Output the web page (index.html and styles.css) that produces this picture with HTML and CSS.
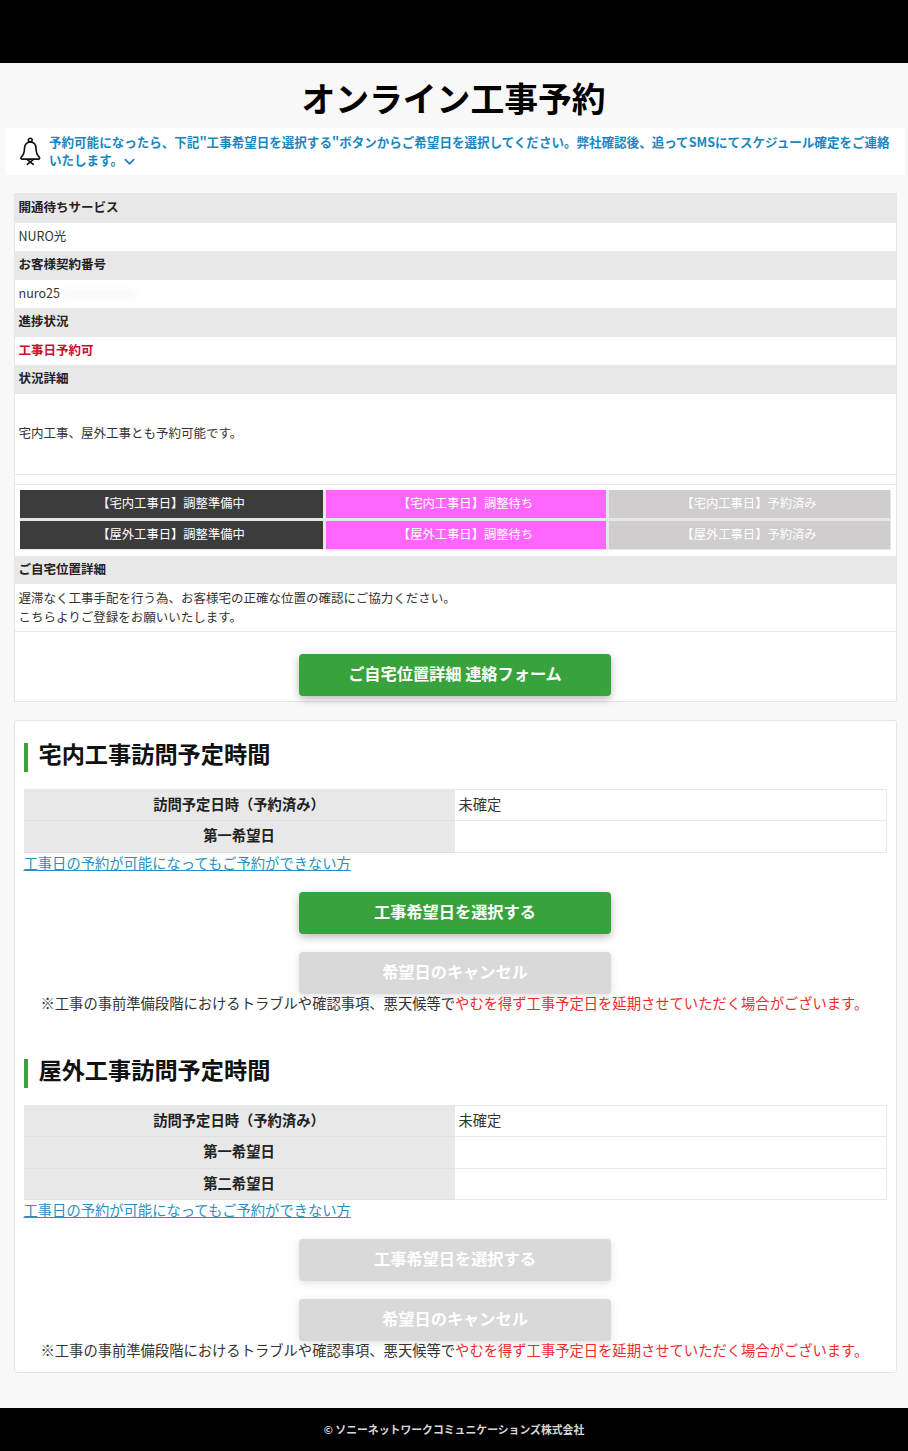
FILE: index.html
```html
<!DOCTYPE html>
<html lang="ja">
<head>
<meta charset="utf-8">
<title>オンライン工事予約</title>
<link rel="stylesheet" href="styles.css">
</head>
<body>
<header class="topbar"></header>
<main class="page">
  <h1 class="title">オンライン工事予約</h1>
  <div class="notice">
    <svg class="bell" viewBox="0 0 24 34" width="20.500" height="29" fill="none" stroke="#111" stroke-width="1.900" stroke-linejoin="round" stroke-linecap="round">
      <circle cx="12" cy="3.600" r="2.200"/>
      <path d="M12 5.800c-4.600 0-6.800 3.600-6.800 8 0 4.400-.8 6.800-3.700 9.800-.9.900-.3 2.400.9 2.400h19.200c1.200 0 1.800-1.500.9-2.400-2.900-3-3.700-5.400-3.700-9.800 0-4.400-2.200-8-6.800-8z"/>
      <path d="M8.500 26.500l7 5.500M15.500 26.500l-7 5.500"/>
    </svg>
    <p class="notice-text">予約可能になったら、下記"工事希望日を選択する"ボタンからご希望日を選択してください。弊社確認後、追ってSMSにてスケジュール確定をご連絡いたします。<svg class="chev" viewBox="0 0 12 8" width="11" height="8" fill="none" stroke="#1a87c0" stroke-width="2" stroke-linecap="round" stroke-linejoin="round"><path d="M1.500 1.500L6 6l4.500-4.500"/></svg></p>
  </div>

  <section class="card info">
    <div class="row-head">開通待ちサービス</div>
    <div class="row-val">NURO光</div>
    <div class="row-head">お客様契約番号</div>
    <div class="row-val">nuro25<span class="smudge"></span></div>
    <div class="row-head">進捗状況</div>
    <div class="row-val status">工事日予約可</div>
    <div class="row-head">状況詳細</div>
    <div class="row-detail">宅内工事、屋外工事とも予約可能です。</div>
    <div class="row-spacer"></div>
    <div class="progress">
      <div class="step dark">【宅内工事日】調整準備中</div>
      <div class="step pink">【宅内工事日】調整待ち</div>
      <div class="step grey">【宅内工事日】予約済み</div>
      <div class="step dark">【屋外工事日】調整準備中</div>
      <div class="step pink">【屋外工事日】調整待ち</div>
      <div class="step grey">【屋外工事日】予約済み</div>
    </div>
    <div class="row-head">ご自宅位置詳細</div>
    <div class="row-multi">遅滞なく工事手配を行う為、お客様宅の正確な位置の確認にご協力ください。<br>こちらよりご登録をお願いいたします。</div>
    <div class="form-action"><a class="btn green">ご自宅位置詳細 連絡フォーム</a></div>
  </section>

  <section class="card visits">
    <h2 class="heading">宅内工事訪問予定時間</h2>
    <div class="vtable">
      <div class="vhead">訪問予定日時（予約済み）</div><div class="vcell">未確定</div>
      <div class="vhead">第一希望日</div><div class="vcell"></div>
    </div>
    <a class="help">工事日の予約が可能になってもご予約ができない方</a>
    <div class="actions">
      <a class="btn green">工事希望日を選択する</a>
      <a class="btn off">希望日のキャンセル</a>
    </div>
    <p class="note">※工事の事前準備段階におけるトラブルや確認事項、悪天候等で<span class="red">やむを得ず工事予定日を延期させていただく場合がございます。</span></p>

    <h2 class="heading second">屋外工事訪問予定時間</h2>
    <div class="vtable">
      <div class="vhead">訪問予定日時（予約済み）</div><div class="vcell">未確定</div>
      <div class="vhead">第一希望日</div><div class="vcell"></div>
      <div class="vhead">第二希望日</div><div class="vcell"></div>
    </div>
    <a class="help">工事日の予約が可能になってもご予約ができない方</a>
    <div class="actions">
      <a class="btn off">工事希望日を選択する</a>
      <a class="btn off">希望日のキャンセル</a>
    </div>
    <p class="note">※工事の事前準備段階におけるトラブルや確認事項、悪天候等で<span class="red">やむを得ず工事予定日を延期させていただく場合がございます。</span></p>
  </section>
</main>
<footer class="footer">© ソニーネットワークコミュニケーションズ株式会社</footer>
</body>
</html>
```
FILE: styles.css
```css
* { box-sizing: border-box; }
html, body { margin: 0; padding: 0; }
body {
  height: 1451px;
  background: #f8f8f8;
  color: #222;
  font-family: "Noto Sans CJK JP", "Noto Sans", sans-serif;
  display: flex;
  flex-direction: column;
  overflow: hidden;
}
.topbar { height: 63px; background: #000; flex: none; }
.page { flex: 1; display: flex; flex-direction: column; align-items: center; padding-left: 2px; }
.title {
  margin: 0 3px 0 0;
  height: 65px;
  font-size: 33.800px;
  line-height: 70px;
  font-weight: 700;
  color: #000;
  text-align: center;
}
.notice {
  width: 900px;
  height: 47px;
  background: #fff;
  display: flex;
  align-items: center;
  gap: 8.500px;
  padding: 0 10px 0 15px;
}
.bell { flex: none; }
.notice-text {
  margin: 0;
  font-size: 12.540px;
  line-height: 18px;
  font-weight: 700;
  color: #1a87c0;
  position: relative;
  top: -1px;
}
.chev { margin-left: 1px; vertical-align: -1px; }
.card {
  width: 883px;
  background: #fff;
  border: 1px solid #e6e6e6;
}
.info { margin-top: 18px; height: 509px; }
.row-head {
  height: 28.500px;
  background: #e8e8e8;
  padding-left: 4px;
  font-size: 12.500px;
  font-weight: 700;
  line-height: 25px;
  color: #222;
}
.row-val {
  height: 28.500px;
  padding-left: 4px;
  font-size: 12.500px;
  line-height: 25px;
  color: #333;
}
.smudge {
  display: inline-block;
  width: 76px;
  height: 8px;
  background: #ececec;
  opacity: .35;
  filter: blur(3px);
}
.status { color: #c8102e; font-weight: 700; }
.row-detail {
  height: 81px;
  padding-left: 4px;
  font-size: 12.500px;
  line-height: 78px;
  color: #333;
  border-bottom: 1px solid #e8e8e8;
}
.row-spacer { height: 10px; border-bottom: 1px solid #e8e8e8; }
.progress {
  display: grid;
  grid-template-columns: 303px 280px 281px;
  grid-auto-rows: 28px;
  gap: 3px;
  padding: 5px 5px 6px 5px;
  background: #e6e6e6;
  background-clip: content-box;
  height: 71px;
}
.step {
  font-size: 12.300px;
  line-height: 26px;
  text-align: center;
  color: #fff;
}
.dark { background: #3c3c3c; }
.pink { background: #ff66ff; }
.grey { background: #cfcdcd; }
.row-multi {
  height: 48px;
  padding: 4px 0 0 4px;
  font-size: 12.500px;
  line-height: 19px;
  color: #333;
  border-bottom: 1px solid #e8e8e8;
}
.form-action { display: flex; justify-content: center; padding-top: 22px; }
.btn {
  display: block;
  width: 312px;
  height: 42px;
  border-radius: 4px;
  font-size: 16.200px;
  font-weight: 700;
  line-height: 38px;
  text-align: center;
  color: #fff;
}
.green { background: #38a33c; box-shadow: 0 3px 8px rgba(0, 0, 0, .28); }
.off { background: #d9d9d9; box-shadow: 0 2px 8px rgba(0, 0, 0, .12); }
.visits {
  margin-top: 18px;
  height: 653px;
  padding: 22px 9px 0 9px;
  border-radius: 3px;
}
.heading {
  margin: 0;
  height: 29px;
  border-left: 4px solid #38a33c;
  padding-left: 11px;
  font-size: 23.200px;
  font-weight: 700;
  line-height: 21px;
  color: #111;
}
.second { margin-top: 46px; }
.vtable {
  margin-top: 17px;
  display: grid;
  grid-template-columns: 430px 1fr;
  grid-auto-rows: 31.300px;
  border-left: 1px solid #e8e8e8;
  border-top: 1px solid #e8e8e8;
}
.vhead, .vcell {
  font-size: 14.300px;
  line-height: 27px;
  border-right: 1px solid #e8e8e8;
  border-bottom: 1px solid #e8e8e8;
}
.vhead { background: #e8e8e8; font-weight: 700; text-align: center; color: #222; border-bottom-color: #e0e0e0; }
.vcell { padding-left: 4px; color: #333; background: #fff; }
.help {
  display: block;
  height: 21px;
  font-size: 14.300px;
  line-height: 19px;
  color: #2b90bd;
  text-decoration: underline;
}
.actions {
  margin-top: 18.400px;
  display: flex;
  flex-direction: column;
  align-items: center;
  gap: 18px;
}
.note {
  margin: -1px 0 0;
  font-size: 14.310px;
  line-height: 20px;
  padding-left: 17px;
  white-space: nowrap;
  color: #333;
}
.red { color: #ee2b2b; }
.footer {
  flex: none;
  height: 43px;
  background: #000;
  color: #d8d8d8;
  font-size: 10.850px;
  font-weight: 700;
  line-height: 42px;
  text-align: center;
}
```
